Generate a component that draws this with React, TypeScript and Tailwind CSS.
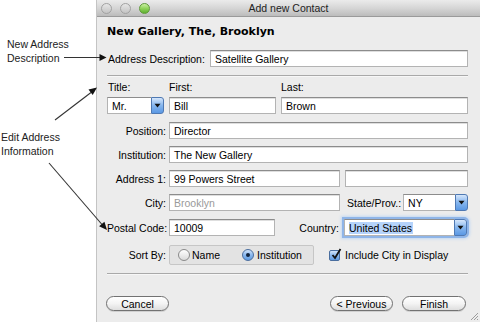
import React from "react";

const sans = { fontFamily: '"Liberation Sans", Arial, sans-serif' };

function Input({ value, className, muted }: { value?: string; className: string; muted?: boolean }) {
  return (
    <div
      className={`h-[17px] bg-white border border-[#b3b3b3] border-t-[#8c8c8c] shadow-[inset_0_1px_0_#dedede] flex items-center pl-[4px] overflow-hidden whitespace-nowrap ${className} ${muted ? "text-[#9a9a9a]" : "text-black"}`}
    >
      {value}
    </div>
  );
}

function Arrow() {
  return (
    <svg width="7" height="5" viewBox="0 0 7 5">
      <path d="M0.5 0.8 L6.5 0.8 L3.5 4.5 Z" fill="#111" />
    </svg>
  );
}

function Select({ value, className, focused }: { value: string; className: string; focused?: boolean }) {
  return (
    <div
      className={`h-[17px] flex rounded-r-[3px] ${className} ${focused ? "shadow-[0_0_0_2px_#8fb5e8,0_0_3px_3px_#c2d8f3]" : ""}`}
    >
      <div className="flex-1 bg-white border border-[#b3b3b3] border-t-[#8c8c8c] border-r-0 flex items-center pl-[4px] whitespace-nowrap overflow-hidden">
        {focused ? <span className="bg-[#b5d3fb] pr-[1px]">{value}</span> : value}
      </div>
      <div className="w-[13px] rounded-r-[3px] border border-[#4f79b3] bg-linear-to-b from-[#d5e6fb] via-[#86b6ee] to-[#5a98e4] flex items-center justify-center">
        <Arrow />
      </div>
    </div>
  );
}

function Separator({ className }: { className: string }) {
  return <div className={`h-[2px] border-t border-[#a9a9a9] border-b border-b-[#f7f7f7] ${className}`} />;
}

function Button({ label, className }: { label: string; className: string }) {
  return (
    <div
      className={`h-[15px] rounded-full border border-[#727272] bg-linear-to-b from-white via-[#f4f4f4] to-[#dedede] flex items-center justify-center text-black shadow-[0_1px_0_#d0d0d0] ${className}`}
    >
      {label}
    </div>
  );
}

function Radio({ checked }: { checked?: boolean }) {
  return checked ? (
    <div className="w-[12px] h-[12px] rounded-full border border-[#4a6e9f] bg-linear-to-b from-[#d2e4fa] via-[#8ab8ee] to-[#5f9be2] flex items-center justify-center">
      <div className="w-[4px] h-[4px] rounded-full bg-[#10233d]" />
    </div>
  ) : (
    <div className="w-[12px] h-[12px] rounded-full border border-[#8a8a8a] bg-linear-to-b from-white to-[#dadada]" />
  );
}

export default function App() {
  return (
    <div className="relative w-[480px] h-[322px] bg-white flex overflow-hidden text-[10.5px] leading-[12px]" style={sans}>
      {/* annotation column */}
      <div className="w-[96px] shrink-0 flex flex-col text-[#222] text-[10.5px] leading-[14px]">
        <div className="pt-[37px] pl-[7px]">
          <div>New Address</div>
          <div>Description</div>
        </div>
        <div className="mt-[65px] pl-[1px]">
          <div>Edit Address</div>
          <div>Information</div>
        </div>
      </div>

      {/* window */}
      <div className="relative flex-1 flex flex-col bg-[#ececec] border-l border-[#c4c4c4]">
        <div className="h-[17px] flex items-center bg-linear-to-b from-[#ebebeb] via-[#d6d6d6] to-[#bcbcbc] border-b border-[#9a9a9a]">
          <div className="w-[54px] flex items-center gap-[8px] pl-[4px]">
            <div className="w-[11px] h-[11px] rounded-full border border-[#a2a2a2] bg-linear-to-b from-[#e6e6e6] to-[#c4c4c4]" />
            <div className="w-[11px] h-[11px] rounded-full border border-[#a2a2a2] bg-linear-to-b from-[#e6e6e6] to-[#c4c4c4]" />
            <div className="w-[11px] h-[11px] rounded-full border border-[#5f9a3a] bg-linear-to-b from-[#c9f0a0] via-[#8fd259] to-[#5eb12f]" />
          </div>
          <div className="flex-1 text-center text-[#222]">Add new Contact</div>
          <div className="w-[54px]" />
        </div>

        <div className="flex flex-col pl-[10px] pr-[12px]">
          <div
            className="pt-[8px] font-bold text-[11px] leading-[14px] text-black"
            style={{ fontFamily: '"DejaVu Sans", Verdana, sans-serif' }}
          >
            New Gallery, The, Brooklyn
          </div>

          <div className="mt-[11px] flex items-center h-[17px]">
            <span className="mr-[4px] pl-[1px]">Address Description:</span>
            <Input value="Satellite Gallery" className="flex-1 ml-[1px]" />
          </div>

          <Separator className="mt-[8px]" />

          <div className="mt-[4px] flex items-center h-[12px]">
            <span className="w-[62px] pl-[1px]">Title:</span>
            <span className="w-[112px]">First:</span>
            <span>Last:</span>
          </div>

          <div className="mt-[4px] flex h-[17px] gap-[5px]">
            <Select value="Mr." className="w-[57px]" />
            <Input value="Bill" className="w-[107px]" />
            <Input value="Brown" className="flex-1" />
          </div>

          <div className="mt-[8px] flex items-center h-[17px]">
            <span className="w-[59px] text-right mr-[3px] whitespace-nowrap">Position:</span>
            <Input value="Director" className="flex-1" />
          </div>

          <div className="mt-[7px] flex items-center h-[17px]">
            <span className="w-[59px] text-right mr-[3px] whitespace-nowrap">Institution:</span>
            <Input value="The New Gallery" className="flex-1" />
          </div>

          <div className="mt-[7px] flex items-center h-[17px]">
            <span className="w-[59px] text-right mr-[3px] whitespace-nowrap">Address 1:</span>
            <Input value="99 Powers Street" className="w-[171px]" />
            <Input className="flex-1 ml-[5px]" />
          </div>

          <div className="mt-[7px] flex items-center h-[17px]">
            <span className="w-[59px] text-right mr-[3px] whitespace-nowrap">City:</span>
            <Input value="Brooklyn" muted className="w-[171px]" />
            <span className="ml-[7px] mr-[2px] whitespace-nowrap">State/Prov.:</span>
            <Select value="NY" className="flex-1" />
          </div>

          <div className="mt-[8px] flex items-center h-[17px]">
            <span className="w-[59px] text-right mr-[3px] whitespace-nowrap">Postal Code:</span>
            <Input value="10009" className="w-[106px]" />
            <span className="flex-1 text-right whitespace-nowrap">Country:</span>
            <Select value="United States" focused className="w-[123px] ml-[5px] mr-[1px]" />
          </div>

          <div className="mt-[9px] flex items-center h-[20px]">
            <span className="w-[59px] text-right mr-[3px] whitespace-nowrap">Sort By:</span>
            <div className="w-[145px] h-[20px] flex items-center pl-[8px] bg-[#e3e3e3] border border-[#c6c6c6] rounded-[2px]">
              <Radio />
              <span className="ml-[2px]">Name</span>
              <div className="ml-[22px]">
                <Radio checked />
              </div>
              <span className="ml-[3px]">Institution</span>
            </div>
            <div className="ml-[15px] w-[11px] h-[11px] rounded-[2px] border border-[#4a6e9f] bg-linear-to-b from-[#d2e4fa] via-[#8ab8ee] to-[#5f9be2] relative">
              <svg className="absolute left-[1px] top-[-3px]" width="11" height="12" viewBox="0 0 11 12">
                <path d="M1.5 7 L4 10 L9.5 1" stroke="#111" strokeWidth="1.8" fill="none" />
              </svg>
            </div>
            <span className="ml-[5px] whitespace-nowrap">Include City in Display</span>
          </div>

          <Separator className="mt-[8px]" />

          <div className="mt-[21px] flex items-center">
            <Button label="Cancel" className="w-[63px] -ml-[1px]" />
            <div className="flex-1" />
            <Button label="< Previous" className="w-[63px]" />
            <Button label="Finish" className="w-[64px] ml-[9px] mr-[2px]" />
          </div>
        </div>

        <svg className="absolute right-[1px] bottom-[1px]" width="9" height="9" viewBox="0 0 9 9">
          <path d="M8 1 L1 8 M8 4 L4 8 M8 7 L7 8" stroke="#9c9c9c" strokeWidth="1" />
        </svg>
      </div>

      {/* annotation arrows */}
      <svg className="absolute left-0 top-0 pointer-events-none" width="480" height="322" viewBox="0 0 480 322">
        <line x1="64" y1="57.5" x2="100" y2="57.5" stroke="#333" strokeWidth="1.1" />
        <polygon points="106.5,57.5 99.5,54 99.5,61" fill="#111" />
        <line x1="55" y1="120" x2="91" y2="92.5" stroke="#333" strokeWidth="1.1" />
        <polygon points="97,87.5 92.7,95.1 88.5,89.5" fill="#111" />
        <line x1="49" y1="163" x2="102" y2="224.5" stroke="#333" strokeWidth="1.1" />
        <polygon points="107,230 99.1,226.3 104.4,221.7" fill="#111" />
      </svg>
    </div>
  );
}
